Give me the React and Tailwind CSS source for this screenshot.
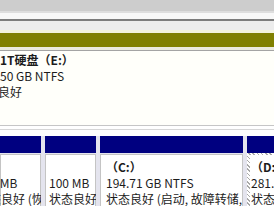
const font = { fontFamily: '"Noto Sans CJK SC", "Noto Sans", sans-serif' };

const Partition = ({ width, grow, children, hatched }) => (
  <div className={`flex flex-col overflow-hidden ${grow ? "flex-1" : ""}`} style={width ? { width } : undefined}>
    <div className="h-[17px] bg-[#000080] shrink-0" />
    {hatched ? (
      <div className="flex-1 pl-[3px] pt-[2px] bg-[repeating-linear-gradient(45deg,#a8a8a8_0px,#a8a8a8_1px,#ffffff_1px,#ffffff_3px)]">
        <div className="h-full bg-white pl-[1px] pt-[4px] whitespace-nowrap">{children}</div>
      </div>
    ) : (
      <div className="flex-1 bg-white border border-[#c4c4c4] mt-[1px] pt-[4px] whitespace-nowrap">{children}</div>
    )}
  </div>
);

export default function App() {
  return (
    <div className="w-[274px] h-[206px] overflow-hidden bg-white text-[12px] leading-[16px] text-[#1c1c1c]" style={font}>
      <div className="h-[11px] bg-[#cdcdcd]" />
      <div className="h-[2px] bg-[#dedede]" />
      <div className="h-[6px] bg-[#f8f8f8]" />
      <div className="h-[2px] bg-[#7c7c7c]" />
      <div className="h-[9px] bg-[#ececec]" />
      <div className="h-[3px] bg-[#f3f3dc]" />
      <div className="h-[14px] bg-[#808000]" />
      <div className="h-[3px] bg-[#ebebdf]" />
      <div className="h-[1px] bg-[#a4a4a4]" />
      <div className="h-[74px] bg-[#fffffa] pt-[1px] whitespace-nowrap">
        <div className="font-bold">1T硬盘（E:）</div>
        <div>50 GB NTFS</div>
        <div className="ml-[-2px]">良好</div>
      </div>
      <div className="h-[1px] bg-[#c6c6c6]" />
      <div className="h-[3px] bg-white" />
      <div className="h-[1px] bg-[#d6d6d6]" />
      <div className="h-[6px] bg-white" />
      <div className="h-[80px] flex gap-[4px] bg-[#e4e4ee]">
        <Partition width={41}>
          <div className="ml-[-24px]">
            <div className="invisible">x</div>
            <div>450 MB</div>
            <div>状态良好 (恢复分区)</div>
          </div>
        </Partition>
        <Partition width={51}>
          <div className="pl-[3px]">
            <div className="invisible">x</div>
            <div>100 MB</div>
            <div>状态良好 (EFI 系统分区)</div>
          </div>
        </Partition>
        <Partition width={143}>
          <div className="pl-[5px]">
            <div className="font-bold">（C:）</div>
            <div>194.71 GB NTFS</div>
            <div>状态良好 (启动, 故障转储, 基本数据分区)</div>
          </div>
        </Partition>
        <Partition grow hatched>
          <div className="font-bold">（D:）</div>
          <div>281.25 GB NTFS</div>
          <div>状态良好 (基本数据分区)</div>
        </Partition>
      </div>
    </div>
  );
}
